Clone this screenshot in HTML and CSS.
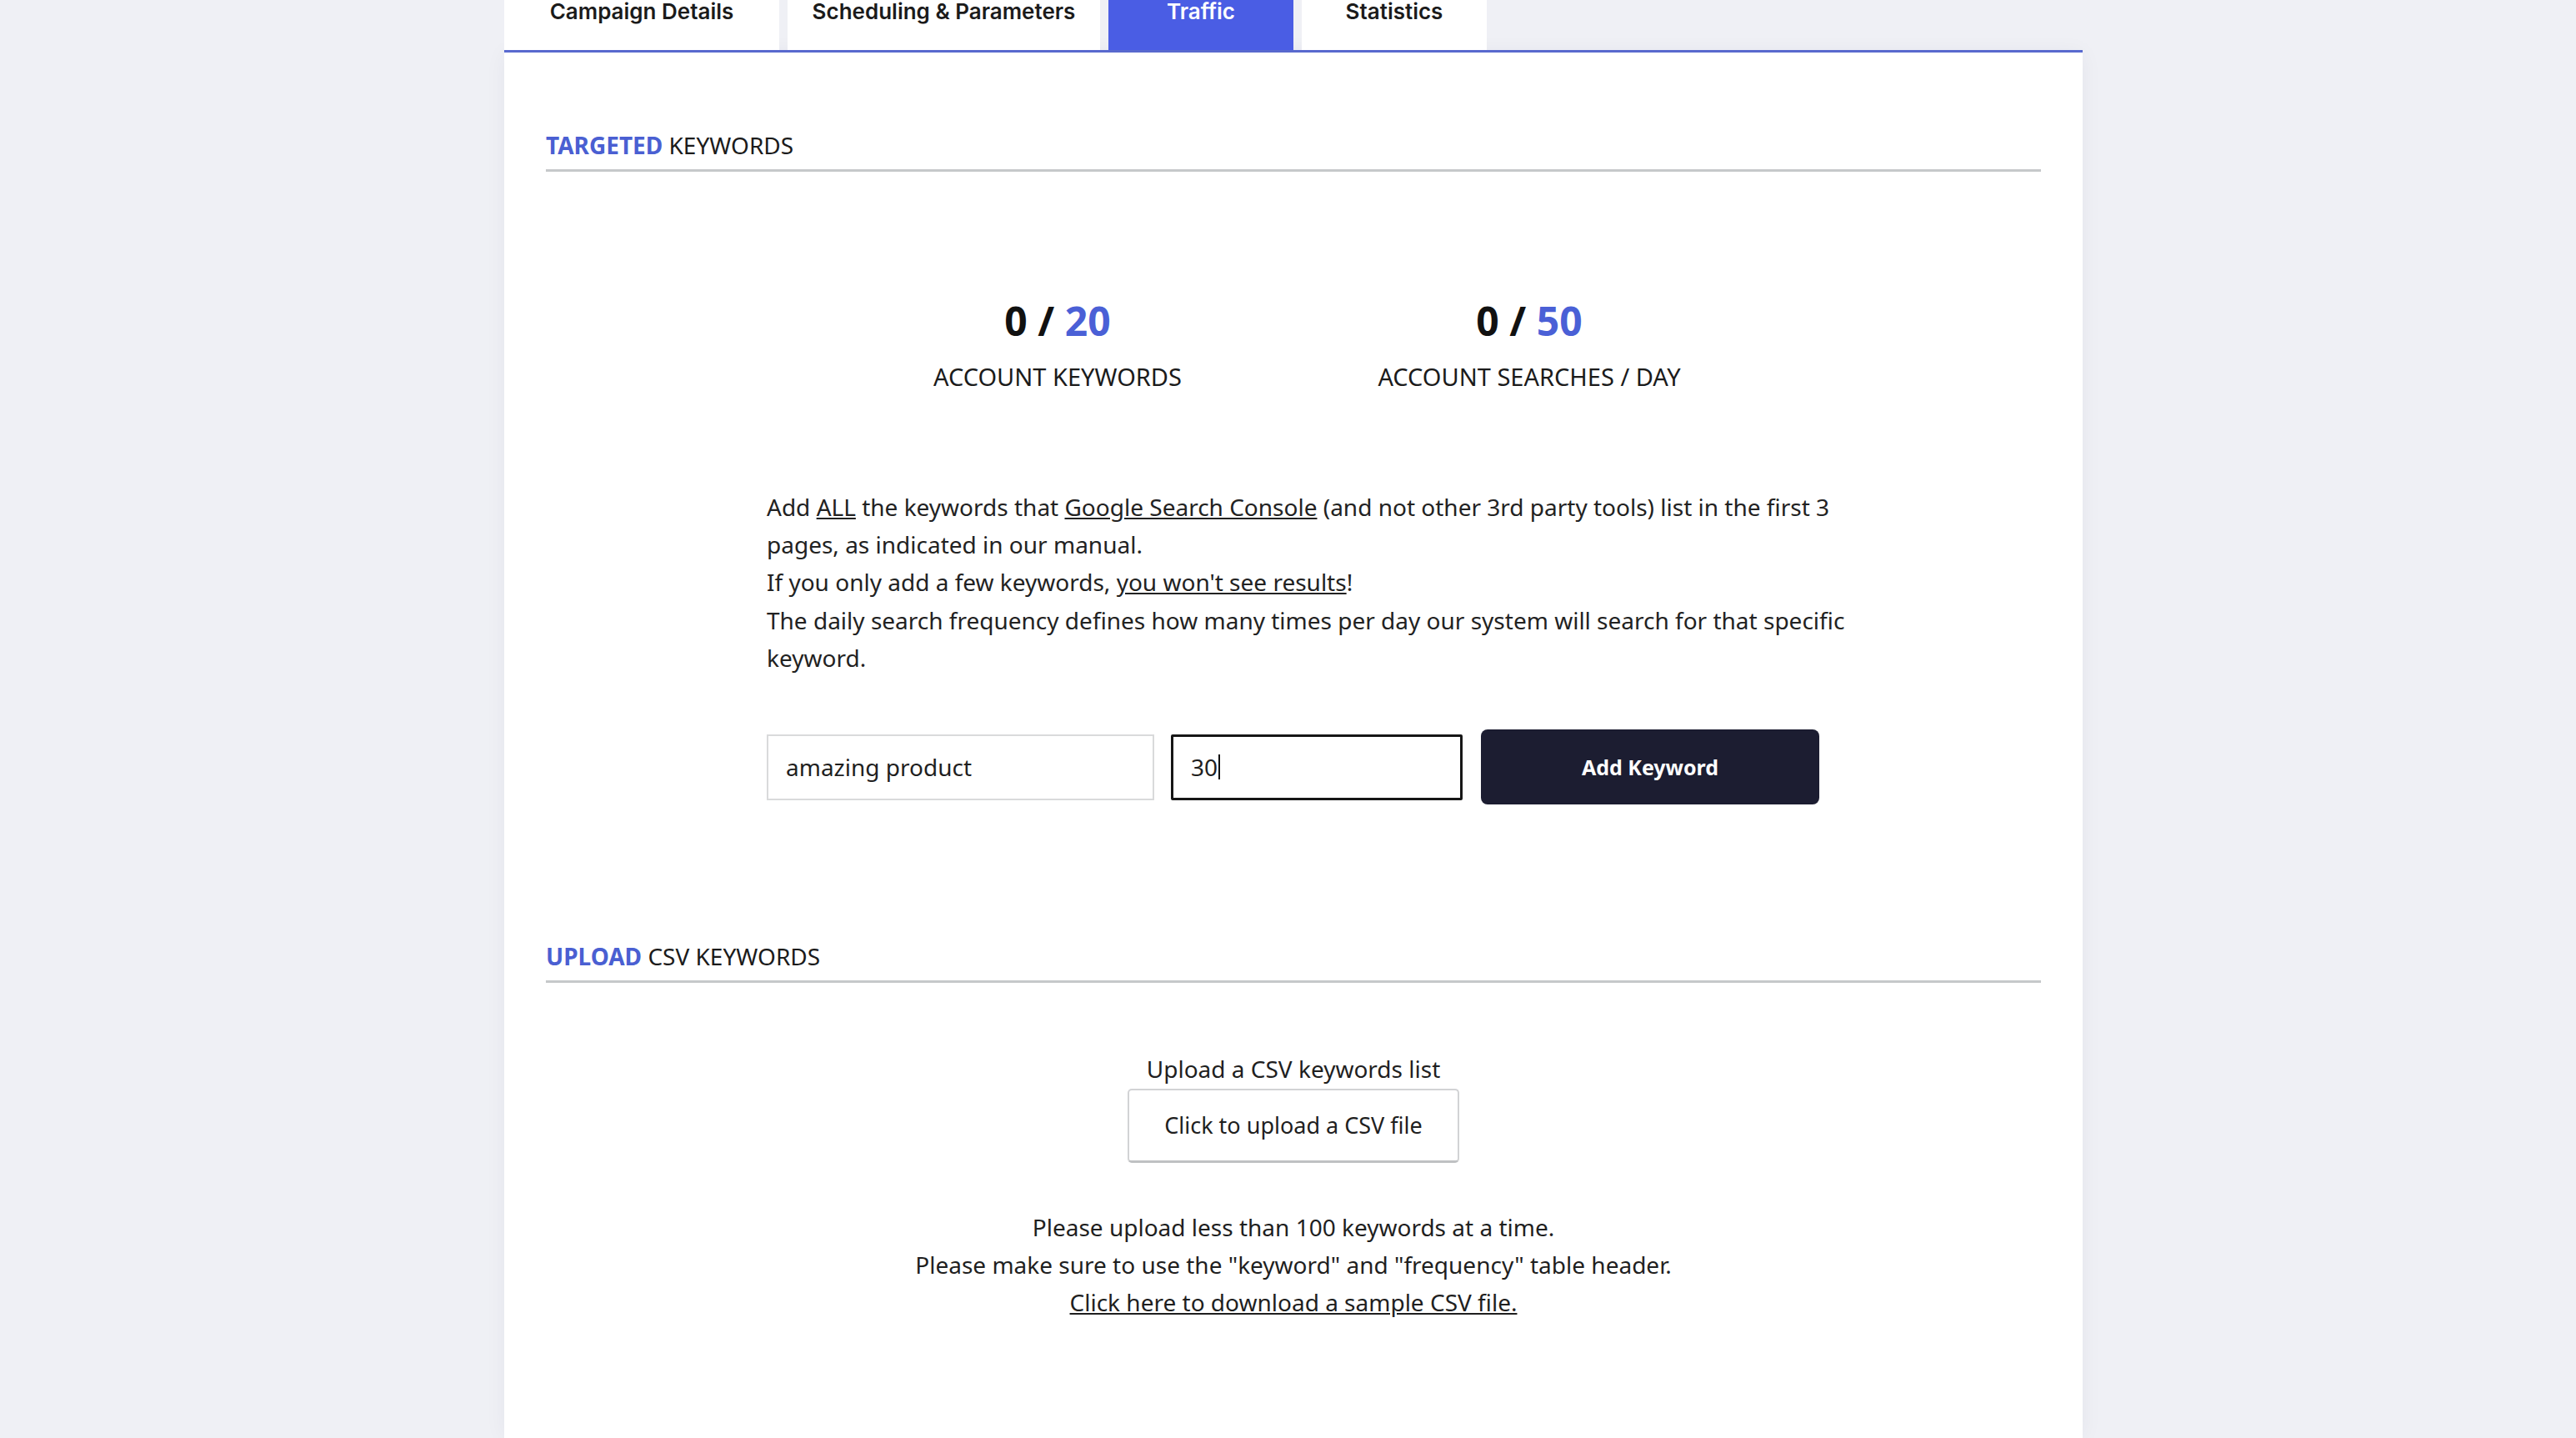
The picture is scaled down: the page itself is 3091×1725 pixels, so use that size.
FILE: index.html
```html
<!DOCTYPE html>
<html lang="en">
<head>
<meta charset="utf-8">
<title>Traffic - Targeted Keywords</title>
<link rel="stylesheet" href="styles.css">
</head>
<body>
<div class="page">
  <nav class="tabs">
    <a class="tab tab-campaign" href="#">Campaign Details</a>
    <a class="tab tab-schedule" href="#">Scheduling &amp; Parameters</a>
    <a class="tab tab-traffic is-active" href="#">Traffic</a>
    <a class="tab tab-stats" href="#">Statistics</a>
  </nav>
  <main class="panel">
    <section class="section section-targeted">
      <h2 class="section-title"><span class="accent">TARGETED</span> KEYWORDS</h2>
      <div class="stats">
        <div class="stat">
          <div class="stat-value">0 / <span class="stat-max">20</span></div>
          <div class="stat-label">ACCOUNT KEYWORDS</div>
        </div>
        <div class="stat">
          <div class="stat-value">0 / <span class="stat-max">50</span></div>
          <div class="stat-label">ACCOUNT SEARCHES / DAY</div>
        </div>
      </div>
      <div class="intro">
        <p class="intro-text">Add <a href="#">ALL</a> the keywords that <a href="#">Google Search Console</a> (and not other 3rd party tools) list in the first 3 pages, as indicated in our manual.<br>If you only add a few keywords, <a href="#">you won't see results</a>!<br>The daily search frequency defines how many times per day our system will search for that specific keyword.</p>
        <form class="keyword-form">
          <div class="field field-keyword">amazing product</div>
          <div class="field field-frequency is-focused">30<span class="caret"></span></div>
          <button type="button" class="btn-add">Add Keyword</button>
        </form>
      </div>
    </section>
    <section class="section section-upload">
      <h2 class="section-title"><span class="accent">UPLOAD</span> CSV KEYWORDS</h2>
      <div class="upload">
        <div class="upload-label">Upload a CSV keywords list</div>
        <button type="button" class="btn-upload">Click to upload a CSV file</button>
      </div>
      <div class="upload-notes">
        <p>Please upload less than 100 keywords at a time.</p>
        <p>Please make sure to use the "keyword" and "frequency" table header.</p>
        <p><a href="#">Click here to download a sample CSV file.</a></p>
      </div>
    </section>
  </main>
</div>
</body>
</html>
```
FILE: styles.css
```css
* {
  box-sizing: border-box;
}

html, body {
  margin: 0;
  padding: 0;
}

body {
  background: #eff0f5;
  font-family: "Noto Sans", "Open Sans", sans-serif;
  color: #1f1f1f;
  font-size: 28px;
}

a {
  color: inherit;
}

.page {
  margin-left: 605px;
  width: 1894px;
}

/* Tabs */
.tabs {
  display: flex;
  gap: 10px;
  height: 63px;
  border-bottom: 3px solid #5b6cd2;
}

.tab {
  display: flex;
  justify-content: center;
  background: #ffffff;
  color: #1b1b1b;
  font-family: "Inter", "Noto Sans", sans-serif;
  font-weight: 600;
  font-size: 26px;
  line-height: 28px;
  text-decoration: none;
  height: 60px;
}

.tab-campaign { width: 330px; }
.tab-schedule { width: 375px; }
.tab-traffic { width: 222px; }
.tab-stats { width: 222px; }

.tab.is-active {
  background: #4a5de4;
  color: #ffffff;
}

/* Panel */
.panel {
  background: #ffffff;
  padding: 92px 50px 120px;
  min-height: calc(100vh - 63px);
  box-shadow: 0 0 24px rgba(30, 40, 80, 0.05);
}

.section-title {
  margin: 0;
  font-size: 28px;
  line-height: 38px;
  font-weight: 400;
  color: #1b1b1b;
  padding-bottom: 10px;
  border-bottom: 3px solid #c6c8ca;
}

.section-title .accent {
  color: #4a5fd2;
  font-weight: 700;
}

/* Stats */
.stats {
  display: grid;
  grid-template-columns: 566px 566px;
  justify-content: center;
  margin-top: 146px;
}

.stat {
  text-align: center;
}

.stat-value {
  font-size: 48px;
  line-height: 65px;
  font-weight: 700;
  color: #111111;
}

.stat-max {
  color: #4a60d6;
}

.stat-label {
  margin-top: 16px;
  font-size: 29px;
  line-height: 38px;
  color: #1b1b1b;
}

/* Intro + form */
.intro {
  margin: 115px 0 0 265px;
  width: 1320px;
}

.intro-text {
  margin: 0;
  line-height: 45.2px;
  color: #222222;
}

.keyword-form {
  display: flex;
  align-items: center;
  margin-top: 63px;
}

.field {
  height: 79px;
  display: flex;
  align-items: center;
  padding: 0 21px;
  background: #ffffff;
  border: 2px solid #d9dadb;
  color: #1f1f1f;
  font-size: 28px;
}

.field-keyword {
  width: 465px;
}

.field-frequency {
  width: 350px;
  margin-left: 20px;
}

.field.is-focused {
  border: 3px solid #161616;
  border-radius: 2px;
}

.caret {
  display: inline-block;
  width: 2px;
  height: 30px;
  background: #111111;
  margin-left: 1px;
}

.btn-add {
  width: 406px;
  height: 90px;
  margin-left: 22px;
  border: none;
  border-radius: 8px;
  background: #1c1d31;
  color: #ffffff;
  font-family: "Noto Sans", sans-serif;
  font-size: 25px;
  font-weight: 700;
}

/* Upload */
.section-upload {
  margin-top: 163px;
}

.upload {
  display: flex;
  flex-direction: column;
  align-items: center;
  margin-top: 81px;
}

.upload-label {
  line-height: 45.5px;
  color: #1f1f1f;
}

.btn-upload {
  width: 398px;
  height: 89px;
  background: #ffffff;
  border: 2px solid #d2d3d5;
  border-bottom-width: 3px;
  border-bottom-color: #bfc1c3;
  border-radius: 5px;
  font-family: "Noto Sans", sans-serif;
  font-size: 27px;
  color: #1f1f1f;
}

.upload-notes {
  margin-top: 55px;
  text-align: center;
}

.upload-notes p {
  margin: 0;
  line-height: 45.3px;
  color: #1f1f1f;
}
```
